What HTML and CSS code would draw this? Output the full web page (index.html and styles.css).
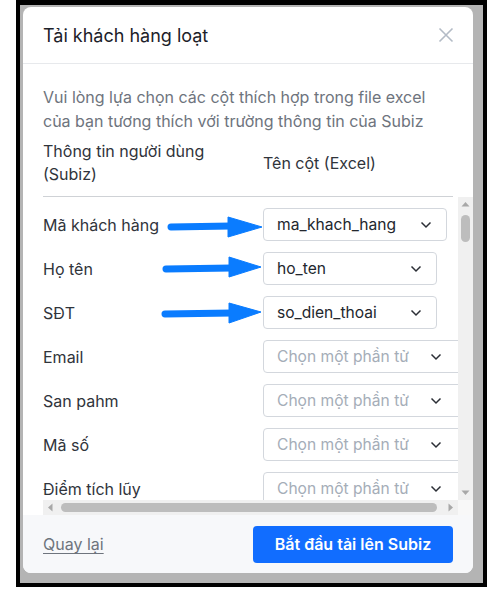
FILE: index.html
```html
<!DOCTYPE html>
<html lang="vi">
<head>
    <meta charset="UTF-8">
    <meta name="viewport" content="width=device-width, initial-scale=1.0">
    <title>Tải khách hàng loạt</title>
    <link rel="stylesheet" href="styles.css">
</head>
<body>
    <div class="frame">
        <div class="modal">
            <div class="modal-header">
                <h2>Tải khách hàng loạt</h2>
                <button class="close" type="button">
                    <svg width="16" height="16" viewBox="0 0 16 16"><path d="M1.5 1.5 L14.5 14.5 M14.5 1.5 L1.5 14.5" stroke="#b3bbc6" stroke-width="1.6" fill="none"/></svg>
                </button>
            </div>

            <div class="modal-body">
                <p class="hint">Vui lòng lựa chọn các cột thích hợp trong file excel của bạn tương thích với trường thông tin của Subiz</p>
                <div class="map-head">
                    <div class="col-field">Thông tin người dùng (Subiz)</div>
                    <div class="col-excel">Tên cột (Excel)</div>
                </div>
                <div class="map-scroll">
                    <div class="map-view">
                        <div class="map-list">
                            <div class="map-row">
                                <div class="field">Mã khách hàng</div>
                                <div class="select select-lg"><span>ma_khach_hang</span><svg width="12" height="8" viewBox="0 0 12 8"><path d="M1.5 1.5 L6 6 L10.5 1.5" stroke="#2b2f36" stroke-width="1.5" fill="none"/></svg></div>
                            </div>
                            <div class="map-row">
                                <div class="field">Họ tên</div>
                                <div class="select select-md"><span>ho_ten</span><svg width="12" height="8" viewBox="0 0 12 8"><path d="M1.5 1.5 L6 6 L10.5 1.5" stroke="#2b2f36" stroke-width="1.5" fill="none"/></svg></div>
                            </div>
                            <div class="map-row">
                                <div class="field">SĐT</div>
                                <div class="select select-md"><span>so_dien_thoai</span><svg width="12" height="8" viewBox="0 0 12 8"><path d="M1.5 1.5 L6 6 L10.5 1.5" stroke="#2b2f36" stroke-width="1.5" fill="none"/></svg></div>
                            </div>
                            <div class="map-row">
                                <div class="field">Email</div>
                                <div class="select empty"><span>Chọn một phần tử</span><svg width="12" height="8" viewBox="0 0 12 8"><path d="M1.5 1.5 L6 6 L10.5 1.5" stroke="#2b2f36" stroke-width="1.5" fill="none"/></svg></div>
                            </div>
                            <div class="map-row">
                                <div class="field">San pahm</div>
                                <div class="select empty"><span>Chọn một phần tử</span><svg width="12" height="8" viewBox="0 0 12 8"><path d="M1.5 1.5 L6 6 L10.5 1.5" stroke="#2b2f36" stroke-width="1.5" fill="none"/></svg></div>
                            </div>
                            <div class="map-row">
                                <div class="field">Mã số</div>
                                <div class="select empty"><span>Chọn một phần tử</span><svg width="12" height="8" viewBox="0 0 12 8"><path d="M1.5 1.5 L6 6 L10.5 1.5" stroke="#2b2f36" stroke-width="1.5" fill="none"/></svg></div>
                            </div>
                            <div class="map-row">
                                <div class="field">Điểm tích lũy</div>
                                <div class="select empty"><span>Chọn một phần tử</span><svg width="12" height="8" viewBox="0 0 12 8"><path d="M1.5 1.5 L6 6 L10.5 1.5" stroke="#2b2f36" stroke-width="1.5" fill="none"/></svg></div>
                            </div>
                        </div>
                    </div>

                    <!-- scrollbars -->
                    <div class="vbar">
                        <svg class="sb-btn" width="15" height="15" viewBox="0 0 15 15"><polygon points="3.5,9.5 7.5,5 11.5,9.5" fill="#a8a8a8"/></svg>
                        <div class="sb-track"><div class="sb-thumb"></div></div>
                        <svg class="sb-btn" width="15" height="15" viewBox="0 0 15 15"><polygon points="3.5,5.5 7.5,10 11.5,5.5" fill="#a8a8a8"/></svg>
                    </div>
                    <div class="hbar">
                        <svg class="sb-btn" width="15" height="15" viewBox="0 0 15 15"><polygon points="9.5,3.5 5,7.5 9.5,11.5" fill="#a8a8a8"/></svg>
                        <div class="sb-track"><div class="sb-thumb"></div></div>
                        <svg class="sb-btn" width="15" height="15" viewBox="0 0 15 15"><polygon points="5.5,3.5 10,7.5 5.5,11.5" fill="#a8a8a8"/></svg>
                    </div>
                    <div class="sb-corner"></div>
                </div>
            </div>

            <div class="modal-footer">
                <a href="#" class="back">Quay lại</a>
                <button class="btn-primary" type="button">Bắt đầu tải lên Subiz</button>
            </div>

            <!-- annotation arrows drawn over the screenshot -->
            <svg class="arrows" width="450" height="566" viewBox="0 0 450 566">
                <g fill="#0a7cff" stroke="#0a7cff">
                    <line x1="148" y1="220" x2="208" y2="219" stroke-width="7" stroke-linecap="round"/>
                    <polygon points="205,210 239,220 205,230" stroke-width="1" stroke-linejoin="round"/>
                    <line x1="143" y1="262" x2="209" y2="261" stroke-width="7" stroke-linecap="round"/>
                    <polygon points="206,250 238,260 206,270" stroke-width="1" stroke-linejoin="round"/>
                    <line x1="142" y1="307" x2="209" y2="306" stroke-width="7" stroke-linecap="round"/>
                    <polygon points="206,296 238,305 206,316" stroke-width="1" stroke-linejoin="round"/>
                </g>
            </svg>
        </div>
    </div>
</body>
</html>
```

FILE: styles.css
```css
body {
    margin: 0;
    background: #fff;
    font-family: Inter, "Noto Sans", sans-serif;
}

.frame {
    box-sizing: border-box;
    margin-left: 16px;
    width: 471px;
    height: 587px;
    border: 4px solid #000;
    border-top-width: 5px;
    padding: 2px 10px 10px 3px;
    background: #b4b4b4;
}

.modal {
    position: relative;
    display: flex;
    flex-direction: column;
    height: 100%;
    background: #fff;
    border-radius: 8px;
    overflow: hidden;
}

.modal-header {
    box-sizing: border-box;
    height: 57px;
    display: flex;
    align-items: center;
    justify-content: space-between;
    padding: 0 19px 0 20px;
    border-bottom: 1px solid #e7e9ec;
}
.modal-header h2 {
    margin: 0;
    font-size: 18px;
    font-weight: 400;
    color: #1c2129;
}
.close {
    border: none;
    background: none;
    padding: 0;
    width: 16px;
    height: 16px;
    cursor: pointer;
}

.modal-body {
    flex: 1;
    padding-left: 20px;
}
.hint {
    margin: 21px 20px 0 0;
    font-size: 16px;
    line-height: 24px;
    color: #6e747d;
}

.map-head {
    display: flex;
    align-items: center;
    margin: 7px 20px 0 0;
    padding-bottom: 10px;
    border-bottom: 1px solid #cfd2d6;
    font-size: 16px;
    line-height: 23px;
    color: #30343b;
}
.col-field {
    width: 190px;
    margin-right: 30px;
}

.map-scroll {
    display: grid;
    grid-template-columns: 1fr 15px;
    grid-template-rows: 1fr 15px;
    height: 318px;
}
.map-view {
    overflow: hidden;
}
.map-list {
    display: flex;
    flex-direction: column;
    gap: 11px;
    padding-top: 11px;
    width: 420px;
}
.map-row {
    display: flex;
    align-items: center;
}
.field {
    flex: 0 0 220px;
    font-size: 16px;
    color: #30343b;
}
.select {
    box-sizing: border-box;
    flex: 0 0 auto;
    display: flex;
    align-items: center;
    justify-content: space-between;
    width: 200px;
    height: 33px;
    padding: 0 14px 0 13px;
    border: 1px solid #d3d7dd;
    border-radius: 4px;
    font-size: 15.6px;
    color: #23272e;
}
.select-lg {
    width: 184px;
}
.select-md {
    width: 174px;
}
.select.empty {
    color: #a5adb8;
}
.select.empty svg {
    margin-right: 6px;
}

/* fake scrollbars */
.vbar,
.hbar {
    display: flex;
    background: #f0f0f0;
}
.vbar {
    flex-direction: column;
}
.sb-btn {
    flex: 0 0 15px;
    display: block;
}
.sb-track {
    flex: 1;
    display: flex;
}
.vbar .sb-track {
    flex-direction: column;
}
.sb-thumb {
    background: #bdbdbd;
    border-radius: 5px;
}
.vbar .sb-thumb {
    height: 27px;
    margin: 3px;
}
.hbar .sb-thumb {
    flex: 1;
    margin: 3px 6px 3px 3px;
}
.sb-corner {
    background: #f8f8f8;
}

.modal-footer {
    box-sizing: border-box;
    height: 58px;
    display: flex;
    align-items: center;
    justify-content: space-between;
    padding: 0 20px;
    background: #f7f8fa;
}
.back {
    font-size: 16px;
    color: #6e747d;
    text-decoration: underline;
    text-underline-offset: 3px;
}
.btn-primary {
    width: 200px;
    height: 37px;
    border: none;
    border-radius: 4px;
    background: #116dff;
    color: #fff;
    font-family: Inter, "Noto Sans", sans-serif;
    font-size: 16px;
    font-weight: 600;
    cursor: pointer;
}

.arrows {
    position: absolute;
    left: 0;
    top: 0;
    pointer-events: none;
}
```
